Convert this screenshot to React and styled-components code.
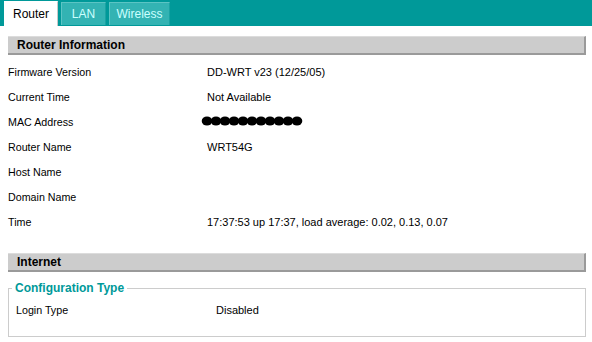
import React from 'react'
import styled, { createGlobalStyle } from 'styled-components'

const GlobalStyle = createGlobalStyle`
  body {
    margin: 0;
    background: #fff;
    font-family: Tahoma, "Liberation Sans", Arial, sans-serif;
    font-size: 11px;
    color: #000;
  }
`

const TabBar = styled.div`
  display: flex;
  align-items: flex-end;
  gap: 3px;
  height: 26px;
  padding-left: 4px;
  background: #009999;
`
const Tab = styled.div`
  box-sizing: border-box;
  height: ${props => props.active ? '25px' : '23px'};
  width: ${props => props.w}px;
  margin-bottom: ${props => props.active ? '0' : '1px'};
  display: flex;
  align-items: center;
  justify-content: center;
  font-size: 12px;
  color: ${props => props.active ? '#000' : '#ccffff'};
  background: ${props => props.active ? '#fff' : '#33b3b3'};
  border-top: 1px solid ${props => props.active ? '#fff' : '#5cc4c4'};
  border-left: 1px solid ${props => props.active ? '#fff' : '#5cc4c4'};
  border-right: 1px solid ${props => props.active ? '#c8c8c8' : '#1aa3a3'};
`
const Content = styled.div`
  padding: 10px 6px 0 8px;
`
const SectionHeader = styled.div`
  box-sizing: border-box;
  height: 19px;
  padding-left: 9px;
  display: flex;
  align-items: center;
  font-weight: bold;
  font-size: 12px;
  background: #cccccc;
  border-top: 1px solid #dcdcdc;
  border-right: 2px solid #9a9a9a;
  border-bottom: 2px solid #9a9a9a;
  margin-top: ${props => props.top || 0}px;
`
const Rows = styled.div`
  padding-top: 4px;
`
const Row = styled.div`
  display: grid;
  grid-template-columns: ${props => props.label || 199}px 1fr;
  height: 25px;
  align-items: center;
`
const Label = styled.span`
  font-size: 10.7px;
`
const Value = styled.span`
  font-size: 11px;
`
const Fieldset = styled.fieldset`
  margin: 9px 0 0 0;
  padding: 2px 0 14px 7px;
  border: 1px solid #cccccc;
  border-radius: 0;
`
const Legend = styled.legend`
  padding: 0 3px;
  margin-left: -4px;
  font-weight: bold;
  font-size: 12px;
  color: #009999;
`

const Blots = () => (
  <svg width="104" height="12" viewBox="0 0 104 12" style={{ marginLeft: -6 }}>
    {Array.from({ length: 11 }).map((_, i) => (
      <ellipse key={i} cx={6 + i * 9} cy="6" rx="5.3" ry="4.5" fill="#000" />
    ))}
  </svg>
)

const routerInfo = [
  ['Firmware Version', 'DD-WRT v23 (12/25/05)'],
  ['Current Time', 'Not Available'],
  ['MAC Address', 'mac'],
  ['Router Name', 'WRT54G'],
  ['Host Name', ''],
  ['Domain Name', ''],
  ['Time', '17:37:53 up 17:37, load average: 0.02, 0.13, 0.07'],
]

export default function App() {
  return (
    <>
      <GlobalStyle />
      <TabBar>
        <Tab active w={54}>Router</Tab>
        <Tab w={45}>LAN</Tab>
        <Tab w={61}>Wireless</Tab>
      </TabBar>
      <Content>
        <SectionHeader>Router Information</SectionHeader>
        <Rows>
          {routerInfo.map(([label, value]) => (
            <Row key={label}>
              <Label>{label}</Label>
              <Value>{value === 'mac' ? <Blots /> : value}</Value>
            </Row>
          ))}
        </Rows>
        <SectionHeader top={19}>Internet</SectionHeader>
        <Fieldset>
          <Legend>Configuration Type</Legend>
          <Row label={200}>
            <Label>Login Type</Label>
            <Value>Disabled</Value>
          </Row>
        </Fieldset>
      </Content>
    </>
  )
}
